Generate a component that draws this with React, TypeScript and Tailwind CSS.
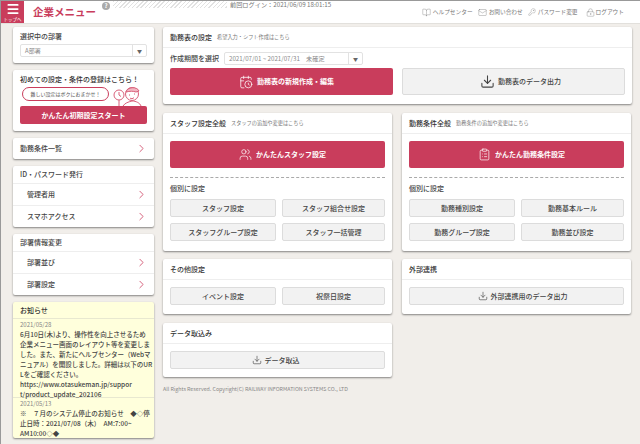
import { ChevronRight, Menu, BookOpen, Mail, KeyRound, LockKeyhole, Download, CalendarClock, Users, ClipboardList } from 'lucide-react';
import type { ReactNode } from 'react';

const font = '[font-family:"Noto_Sans_CJK_JP","Liberation_Sans",sans-serif]';

const notice1 = [
  '6月10日(木)より、操作性を向上させるため',
  '企業メニュー画面のレイアウト等を変更しま',
  'した。また、新たにヘルプセンター（Webマ',
  'ニュアル）を開設しました。詳細は以下のUR',
  'Lをご確認ください。',
  'https://www.otasukeman.jp/suppor',
  't/product_update_202106',
];
const notice2 = [
  '※　７月のシステム停止のお知らせ　◆◇停',
  '止日時：2021/07/08（木）　AM:7:00~',
  'AM10:00◇◆',
];

function Card({ className = '', children }: { className?: string; children: ReactNode }) {
  return <div className={`bg-white rounded-[2px] shadow-[0_1px_2px_rgba(0,0,0,0.45)] ${className}`}>{children}</div>;
}

function LinkRow({ label }: { label: string }) {
  return (
    <div className="flex items-center justify-between h-[21px] pr-[6px] pl-[7px]">
      <span className="text-[7px] font-medium text-[#444]">{label}</span>
      <ChevronRight size={13} strokeWidth={1.5} className="text-[#cc4060]" />
    </div>
  );
}

function LinkGroup({ title, links }: { title: string; links: string[] }) {
  return (
    <Card>
      <div className="h-[17px] flex items-center pl-[7px] text-[7px] font-medium text-[#444]">{title}</div>
      {links.map((label) => (
        <div key={label} className="flex items-center justify-between h-[22px] pr-[6px] pl-[14px] border-t border-[#eeeeee]">
          <span className="text-[7px] font-medium text-[#444]">{label}</span>
          <ChevronRight size={13} strokeWidth={1.5} className="text-[#cc4060]" />
        </div>
      ))}
    </Card>
  );
}

function CardHead({ title, sub }: { title: string; sub?: string }) {
  return (
    <div className="h-[21px] flex items-center gap-[5px] px-[7px] border-b border-[#eeeeee]">
      <span className="text-[7px] font-medium text-[#333]">{title}</span>
      {sub && <span className="text-[5.2px] text-[#777]">{sub}</span>}
    </div>
  );
}

function GrayBtn({ children, className = 'h-[18px]' }: { children: ReactNode; className?: string }) {
  return (
    <div className={`flex items-center justify-center gap-[3px] bg-[#f2f2f2] border border-[#dcdcdc] rounded-[2px] text-[7px] font-medium text-[#444] ${className}`}>
      {children}
    </div>
  );
}

function RedBtn({ children, className = '' }: { children: ReactNode; className?: string }) {
  return (
    <div className={`flex items-center justify-center gap-[4px] bg-[#c93d5c] rounded-[2px] text-[7px] font-bold text-white ${className}`}>
      {children}
    </div>
  );
}

function SettingCard({ title, sub, icon, action, items }: { title: string; sub: string; icon: ReactNode; action: string; items: string[] }) {
  return (
    <Card className="w-[229px] h-[138px]">
      <CardHead title={title} sub={sub} />
      <div className="px-[7px] pt-[7px]">
        <RedBtn className="h-[27px] pl-[10px]">{icon}{action}</RedBtn>
        <div className="mt-[9px] border-t border-dashed border-[#aaaaaa]" />
        <div className="mt-[5px] text-[7px] font-medium text-[#444] leading-[11px]">個別に設定</div>
        <div className="mt-[5px] grid grid-cols-[106px_103px] gap-x-[6px] gap-y-[6px]">
          {items.map((item) => <GrayBtn key={item}>{item}</GrayBtn>)}
        </div>
      </div>
    </Card>
  );
}

export default function App() {
  return (
    <div className={`${font} w-[640px] h-[444px] overflow-hidden bg-[#f1eeea] border-l border-[#999] border-t flex flex-col`}>
      <header className="h-[23px] shrink-0 bg-white flex items-stretch border-b border-[#e2e0dc]">
        <div className="w-[23px] bg-[#c93d5c] flex flex-col items-center text-white">
          <Menu size={14} strokeWidth={3} className="mt-[1px]" />
          <span className="text-[4.5px] leading-[6px]">トップへ</span>
        </div>
        <div className="ml-[9px] text-[10.5px] font-bold text-[#c93d5c] leading-[21px]">企業メニュー</div>
        <div className="ml-[6px] mt-[1px] w-[8px] h-[8px] rounded-full bg-[#aaaaaa] text-white text-[6px] leading-[8px] text-center font-bold">?</div>
        <div className="flex-1 relative">
          <div className="absolute left-[3px] top-0 w-[114px] h-[7px] bg-[repeating-linear-gradient(135deg,#e2e2e2_0px,#e2e2e2_1px,#ffffff_1px,#ffffff_3px)]" />
          <div className="absolute left-[120px] top-[0px] text-[6.2px] leading-[8px] text-[#777] whitespace-nowrap">前回ログイン：2021/06/09 18:01:15</div>
          <div className="absolute right-[16px] top-[6px] flex items-center gap-[5px] text-[5.7px] text-[#777] leading-[10px]">
            <span className="flex items-center gap-[2px]"><BookOpen size={9} strokeWidth={1} />ヘルプセンター</span>
            <span className="flex items-center gap-[2px]"><Mail size={9} strokeWidth={1} />お問い合わせ</span>
            <span className="flex items-center gap-[2px]"><KeyRound size={8} strokeWidth={1} />パスワード変更</span>
            <span className="ml-[3px] flex items-center gap-[1px]"><LockKeyhole size={9} strokeWidth={1} />ログアウト</span>
          </div>
        </div>
      </header>

      <div className="flex-1 flex pl-[12px] pt-[3px] gap-[9px]">
        <aside className="w-[141px] flex flex-col gap-[7px]">
          <Card className="h-[36px] px-[7px] pt-[3px]">
            <div className="text-[7px] font-medium text-[#444] leading-[12px]">選択中の部署</div>
            <div className="mt-[2px] h-[13px] flex items-center justify-between border border-[#e2e2e2] rounded-[2px] text-[6px] text-[#888] pl-[4px]">
              A部署
              <span className="w-[14px] h-full border-l border-[#e2e2e2] flex items-center justify-center text-[5px] text-[#666]">▼</span>
            </div>
          </Card>
          <Card className="h-[61px] px-[7px] pt-[3px] relative">
            <div className="text-[7px] font-medium text-[#333] leading-[12px] whitespace-nowrap">初めての設定・条件の登録はこちら！</div>
            <div className="mt-[2px] ml-[2px] w-[87px] h-[14px] flex items-center justify-center rounded-full border border-[#c93d5c] text-[5px] text-[#555]">難しい設定はボクにおまかせ！</div>
            <svg className="absolute left-[100px] top-[17px]" width="30" height="19" viewBox="0 0 30 19" fill="none" stroke="#d9607a" strokeWidth="1">
              <circle cx="6" cy="8" r="5" />
              <path d="M6 5v3l2 1.5M6 13v6" />
              <circle cx="19" cy="7" r="6.5" fill="#ffffff" />
              <path d="M13 5c1-5 11-6 13-1l-3 1c-3-1-6-1-10 0z" fill="#f2b7c3" />
              <path d="M16 8h1M21 7h1M17 11c1 1 3 1 4-.5" />
              <path d="M10 19c2-3 5-4 9-5 4 0 8 2 9 5" fill="#ffffff" />
            </svg>
            <RedBtn className="mt-[5px] h-[18px] relative">かんたん初期設定スタート</RedBtn>
          </Card>
          <Card><LinkRow label="勤務条件一覧" /></Card>
          <LinkGroup title="ID・パスワード発行" links={['管理者用', 'スマホアクセス']} />
          <LinkGroup title="部署情報変更" links={['部署並び', '部署設定']} />
          <div className="bg-[#ffffdc] rounded-[2px] shadow-[0_1px_2px_rgba(0,0,0,0.45)] h-[136px] overflow-hidden">
            <div className="h-[17px] flex items-center px-[7px] text-[7px] font-medium text-[#333] border-b border-[#e8e8d0]">お知らせ</div>
            <div className="h-[79px] px-[7px] pt-[1px] border-b border-[#e8e8d0]">
              <div className="text-[6px] leading-[9px] text-[#888]">2021/05/28</div>
              {notice1.map((line) => (
                <div key={line} className="text-[6.5px] leading-[10px] font-medium text-[#444] whitespace-nowrap">{line}</div>
              ))}
            </div>
            <div className="px-[7px] pt-[1px]">
              <div className="text-[6px] leading-[9px] text-[#888]">2021/05/13</div>
              {notice2.map((line) => (
                <div key={line} className="text-[6.5px] leading-[10px] font-medium text-[#444] whitespace-nowrap">{line}</div>
              ))}
            </div>
          </div>
        </aside>

        <main className="w-[469px] flex flex-col">
          <Card className="h-[77px]">
            <CardHead title="勤務表の設定" sub="希望入力・シフト作成はこちら" />
            <div className="px-[7px] pt-[4px]">
              <div className="h-[13px] flex items-center gap-[5px]">
                <span className="text-[7px] font-medium text-[#444]">作成期間を選択</span>
                <div className="w-[139px] h-[13px] flex items-center justify-between border border-[#e2e2e2] rounded-[2px] text-[6.2px] text-[#888] pl-[4px] whitespace-nowrap">
                  2021/07/01 ~ 2021/07/31　未確定
                  <span className="w-[14px] h-full shrink-0 border-l border-[#e2e2e2] flex items-center justify-center text-[5px] text-[#666]">▼</span>
                </div>
              </div>
              <div className="mt-[3px] flex gap-[9px]">
                <RedBtn className="w-[223px] h-[27px] pl-[10px]"><CalendarClock size={14} strokeWidth={1.3} />勤務表の新規作成・編集</RedBtn>
                <GrayBtn className="w-[223px] h-[27px] pl-[14px]"><Download size={15} strokeWidth={1.7} />勤務表のデータ出力</GrayBtn>
              </div>
            </div>
          </Card>

          <div className="mt-[9px] flex gap-[10px]">
            <SettingCard title="スタッフ設定全般" sub="スタッフの追加や変更はこちら" icon={<Users size={13} strokeWidth={1.3} />} action="かんたんスタッフ設定" items={['スタッフ設定', 'スタッフ組合せ設定', 'スタッフグループ設定', 'スタッフ一括管理']} />
            <SettingCard title="勤務条件全般" sub="勤務条件の追加や変更はこちら" icon={<ClipboardList size={13} strokeWidth={1.3} />} action="かんたん勤務条件設定" items={['勤務種別設定', '勤務基本ルール', '勤務グループ設定', '勤務並び設定']} />
          </div>

          <div className="mt-[8px] flex gap-[10px] items-start">
            <div className="w-[229px] flex flex-col gap-[9px]">
              <Card className="h-[55px]">
                <CardHead title="その他設定" />
                <div className="px-[7px] pt-[7px] grid grid-cols-[106px_103px] gap-x-[6px]">
                  <GrayBtn>イベント設定</GrayBtn>
                  <GrayBtn>祝祭日設定</GrayBtn>
                </div>
              </Card>
              <Card className="h-[54px]">
                <CardHead title="データ取込み" />
                <div className="px-[7px] pt-[7px]">
                  <GrayBtn className="h-[18px] pr-[4px]"><Download size={10} strokeWidth={1.5} />データ取込</GrayBtn>
                </div>
              </Card>
              <div className="text-[5.3px] leading-[8px] text-[#888] -mt-[1px] whitespace-nowrap">All Rights Reserved. Copyright(C) RAILWAY INFORMATION SYSTEMS CO., LTD</div>
            </div>
            <Card className="w-[229px] h-[55px]">
              <CardHead title="外部連携" />
              <div className="px-[7px] pt-[7px]">
                <GrayBtn className="h-[18px] pl-[12px]"><Download size={10} strokeWidth={1.5} />外部連携用のデータ出力</GrayBtn>
              </div>
            </Card>
          </div>
        </main>
      </div>
    </div>
  );
}
